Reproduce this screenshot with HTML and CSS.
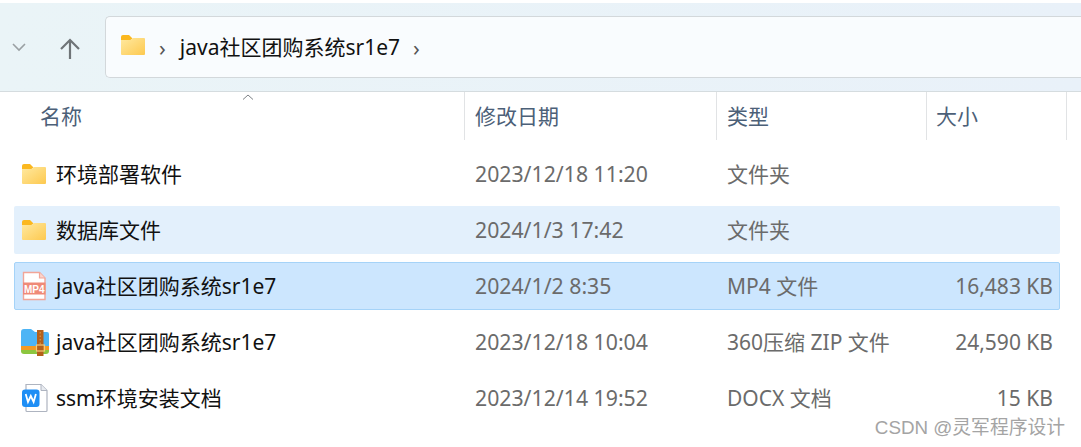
FILE: index.html
```html
<!DOCTYPE html>
<html lang="zh-CN">
<head>
    <meta charset="UTF-8">
    <title>java社区团购系统sr1e7</title>
    <link rel="stylesheet" href="styles.css">
</head>
<body>

    <!-- Barra de navegacion -->
    <div class="toolbar">
        <svg class="nav-down" width="16" height="10" viewBox="0 0 16 10"><path d="M2 2l6 6 6-6" fill="none" stroke="#9aa0a3" stroke-width="1.6"/></svg>
        <svg class="nav-up" width="22" height="24" viewBox="0 0 22 24"><path d="M11 22V3M2 12l9-9 9 9" fill="none" stroke="#6f7477" stroke-width="2.2"/></svg>
        <div class="address">
            <svg class="address-folder" width="26" height="22" viewBox="0 0 26 22">
                <use href="#folder"/>
            </svg>
            <span class="crumb-sep">›</span>
            <span class="crumb">java社区团购系统sr1e7</span>
            <span class="crumb-sep last">›</span>
        </div>
    </div>

    <!-- Cabecera de columnas -->
    <div class="list-head">
        <div class="head-cell head-name">名称</div>
        <div class="head-cell head-date">修改日期</div>
        <div class="head-cell head-type">类型</div>
        <div class="head-cell head-size">大小</div>
        <svg class="sort-caret" width="12" height="6" viewBox="0 0 12 6"><path d="M1 5.5L6 1l5 4.5" fill="none" stroke="#7d8286" stroke-width="1"/></svg>
    </div>

    <div class="list">
        <div class="row">
            <div class="cell-name">
                <svg class="icon" width="26" height="22" viewBox="0 0 26 22"><use href="#folder"/></svg>
                <span>环境部署软件</span>
            </div>
            <div class="cell-date">2023/12/18 11:20</div>
            <div class="cell-type">文件夹</div>
            <div class="cell-size"></div>
        </div>
        <div class="row hovered">
            <div class="cell-name">
                <svg class="icon" width="26" height="22" viewBox="0 0 26 22"><use href="#folder"/></svg>
                <span>数据库文件</span>
            </div>
            <div class="cell-date">2024/1/3 17:42</div>
            <div class="cell-type">文件夹</div>
            <div class="cell-size"></div>
        </div>
        <div class="row selected">
            <div class="cell-name">
                <svg class="icon" width="26" height="30" viewBox="0 0 26 30">
                    <path d="M2.500 1.500h16l5.500 5.500v21.500h-21.500z" fill="#fff" stroke="#f2a597" stroke-width="1.400"/>
                    <path d="M18.500 1.500v5.500h5.500" fill="#fbd5cd" stroke="#f2a597" stroke-width="1.200"/>
                    <rect x="2" y="11.500" width="22.500" height="12" fill="#ef8a78"/>
                    <text class="mp4-label" x="13.200" y="21.500">MP4</text>
                </svg>
                <span>java社区团购系统sr1e7</span>
            </div>
            <div class="cell-date">2024/1/2 8:35</div>
            <div class="cell-type">MP4 文件</div>
            <div class="cell-size">16,483 KB</div>
        </div>
        <div class="row">
            <div class="cell-name">
                <svg class="icon icon-zip" width="30" height="28" viewBox="0 0 30 28">
                    <path d="M1 4a3 3 0 0 1 3-3h7l4 3h12a2 2 0 0 1 2 2v16H1z" fill="#4db4f5"/>
                    <path d="M1 18h28v4H1z" fill="#f59a23"/>
                    <path d="M1 22h28v1a3 3 0 0 1-3 3H4a3 3 0 0 1-3-3z" fill="#8cc63f"/>
                    <rect x="17" y="2" width="6.500" height="26" fill="#b5601a"/>
                    <path d="M20.200 4v12" stroke="#e0a050" stroke-width="1" stroke-dasharray="1.500 2"/>
                    <rect x="16.500" y="17" width="8" height="6" fill="none" stroke="#f5c878" stroke-width="1.200"/>
                </svg>
                <span>java社区团购系统sr1e7</span>
            </div>
            <div class="cell-date">2023/12/18 10:04</div>
            <div class="cell-type">360压缩 ZIP 文件</div>
            <div class="cell-size">24,590 KB</div>
        </div>
        <div class="row">
            <div class="cell-name">
                <svg class="icon" width="27" height="30" viewBox="0 0 27 30">
                    <path d="M5 1.500h15l6 6v20a1 1 0 0 1-1 1H6a1 1 0 0 1-1-1z" fill="#fff" stroke="#aeb4c0" stroke-width="1.200"/>
                    <path d="M20 1.500v6h6" fill="#e8ebf0" stroke="#aeb4c0" stroke-width="1"/>
                    <rect x="1" y="6.500" width="17.500" height="17.500" rx="3" fill="#1e8ef5"/>
                    <path d="M4.700 11l2.300 8 2.800-6 2.800 6 2.300-8" fill="none" stroke="#fff" stroke-width="1.800"/>
                </svg>
                <span>ssm环境安装文档</span>
            </div>
            <div class="cell-date">2023/12/14 19:52</div>
            <div class="cell-type">DOCX 文档</div>
            <div class="cell-size">15 KB</div>
        </div>
    </div>

    <div class="watermark">CSDN @灵军程序设计</div>

    <svg class="defs" width="0" height="0">
        <defs>
            <linearGradient id="folder-fill" x1="0" y1="0" x2="1" y2="1">
                <stop offset="0" stop-color="#ffe9a0"/>
                <stop offset="1" stop-color="#fdc94f"/>
            </linearGradient>
            <g id="folder">
                <path d="M1 3a2 2 0 0 1 2-2h6l3.500 3.500-2 1.500H1z" fill="#fbb81f"/>
                <path d="M1 6h9.500l2.500-2h11a1 1 0 0 1 1 1v15a1 1 0 0 1-1 1H2a1 1 0 0 1-1-1z" fill="url(#folder-fill)"/>
            </g>
        </defs>
    </svg>

</body>
</html>
```

FILE: styles.css
```css
/* Estilo general */
body {
    margin: 0;
    width: 1081px;
    height: 447px;
    overflow: hidden;
    position: relative;
    background-color: #ffffff;
    font-family: "Noto Sans", "Noto Sans CJK SC", sans-serif;
    font-size: 21px;
}

.defs {
    position: absolute;
}

/* Barra superior */
.toolbar {
    margin-top: 3px;
    height: 88px;
    border-bottom: 1px solid #d5dcdf;
    background: linear-gradient(90deg, #eaf4f7, #e9f1f9);
    display: flex;
    align-items: center;
}

.nav-down {
    margin-left: 11px;
}

.nav-up {
    margin-left: 32px;
    margin-top: 3px;
}

.address {
    margin-left: 24px;
    flex: 1;
    height: 60px;
    border: 1px solid #d3d8db;
    border-right: none;
    border-radius: 5px 0 0 5px;
    background-color: #f9fcfe;
    display: flex;
    align-items: center;
    color: #111111;
}

.address-folder {
    margin-left: 14px;
    margin-top: -4px;
}

.crumb-sep {
    margin-left: 13px;
    color: #555555;
    font-size: 22px;
}

.crumb {
    margin-left: 14px;
    margin-top: -2px;
}

/* Cabecera */
.list-head {
    position: relative;
    height: 46px;
    display: grid;
    grid-template-columns: 465px 252px 210px 140px;
    color: #4c6078;
}

.head-cell {
    border-right: 1px solid #e1e3e5;
    line-height: 48px;
    box-sizing: border-box;
}

.head-name {
    padding-left: 40px;
}

.head-date {
    padding-left: 10px;
}

.head-type {
    padding-left: 10px;
}

.head-size {
    padding-left: 9px;
}

.sort-caret {
    position: absolute;
    left: 242px;
    top: 2px;
}

/* Filas */
.list {
    margin: 12px 21px 0 14px;
    display: flex;
    flex-direction: column;
    gap: 8px;
}

.row {
    height: 48px;
    box-sizing: border-box;
    display: grid;
    grid-template-columns: 461px 252px 1fr auto;
    align-items: center;
    border-radius: 2px;
    color: #6b6b6b;
    line-height: 46px;
}

.row.hovered {
    background-color: #e3f0fc;
}

.row.selected {
    background-color: #cce6fe;
    border: 1px solid #a5d3f8;
}

.row.selected .cell-name,
.row.selected .cell-date,
.row.selected .cell-type {
    margin-left: -1px;
}

.row.selected .cell-size {
    padding-right: 6px;
}

.cell-name {
    display: flex;
    align-items: center;
    color: #111111;
    position: relative;
    padding-left: 42px;
}

.cell-date {
    font-size: 21.25px;
}

.icon {
    position: absolute;
    left: 7px;
    top: 50%;
    transform: translateY(-50%);
}

.icon-zip {
    left: 6px;
}

.cell-size {
    padding-right: 7px;
    text-align: right;
}

.mp4-label {
    font-family: "Liberation Sans", sans-serif;
    font-size: 10px;
    font-weight: bold;
    fill: #ffffff;
    text-anchor: middle;
}

/* Marca de agua */
.watermark {
    position: absolute;
    right: 16px;
    bottom: 8px;
    color: #a4a4a4;
    font-size: 18.8px;
    font-family: "Liberation Sans", "Noto Sans CJK SC", sans-serif;
}
```
